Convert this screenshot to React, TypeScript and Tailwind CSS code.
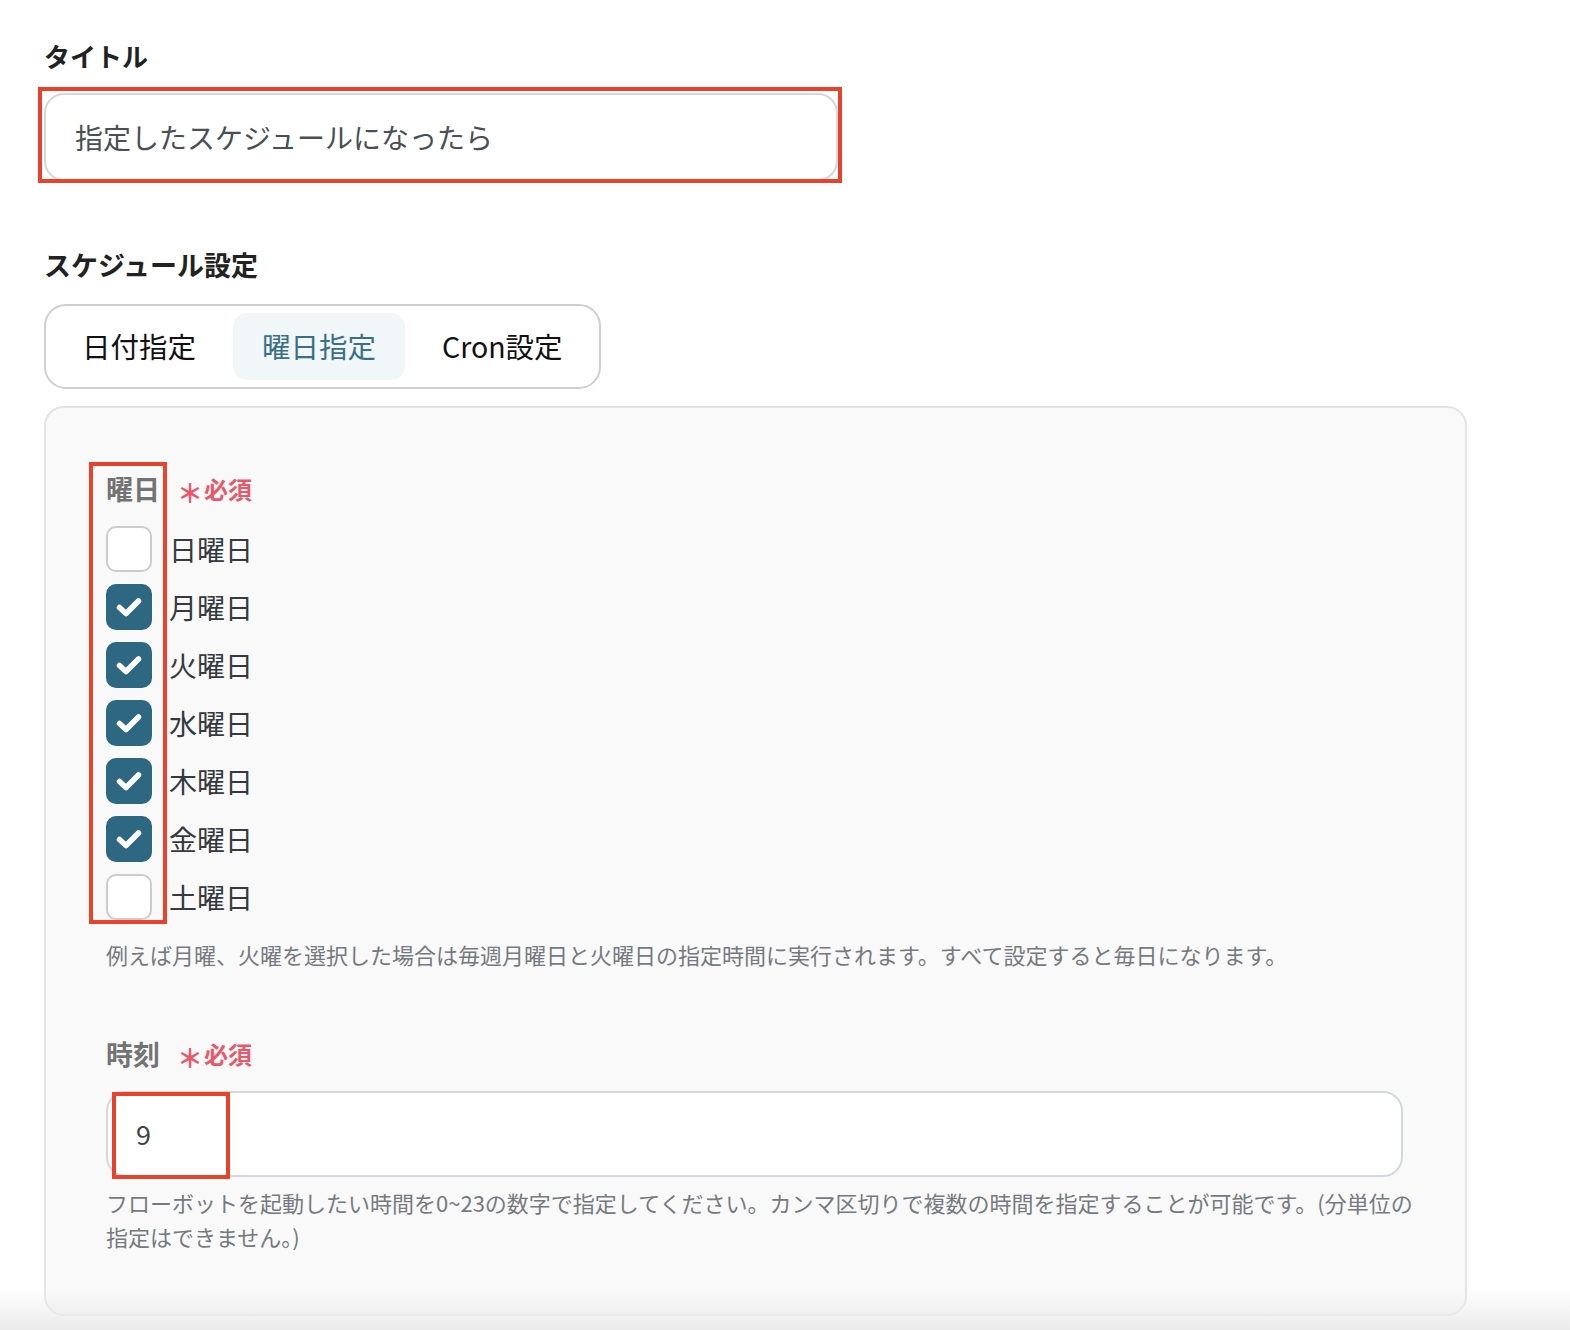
import React from 'react';

const days = [
  { label: '日曜日', checked: false },
  { label: '月曜日', checked: true },
  { label: '火曜日', checked: true },
  { label: '水曜日', checked: true },
  { label: '木曜日', checked: true },
  { label: '金曜日', checked: true },
  { label: '土曜日', checked: false },
];

const Required: React.FC = () => (
  <span className="ml-[17px] flex items-center text-[#e8586a] font-bold">
    <span className="text-[26px] leading-none mt-[6px]">＊</span>
    <span className="text-[24px] leading-none ml-[1px]">必須</span>
  </span>
);

const CheckBox: React.FC<{ checked: boolean }> = ({ checked }) =>
  checked ? (
    <span className="flex items-center justify-center w-[46px] h-[46px] rounded-[10px] bg-[#2e6781]">
      <svg width="30" height="24" viewBox="0 0 30 24" fill="none">
        <path d="M5.5 12.5l6.5 6L24.5 6" stroke="white" strokeWidth="5.5" strokeLinecap="round" strokeLinejoin="round" />
      </svg>
    </span>
  ) : (
    <span className="block w-[46px] h-[46px] rounded-[10px] bg-white border-2 border-[#cccccc]" />
  );

const App: React.FC = () => {
  return (
    <div className="relative min-h-[1330px] overflow-hidden bg-white pl-[44px] pt-[40px] font-['Noto_Sans_CJK_JP',sans-serif] text-[#222]">
      <h2 className="text-[26px] font-bold leading-[32px]">タイトル</h2>
      <div className="relative mt-[21px] w-[794px] h-[88px]">
        <div className="flex items-center h-full rounded-[20px] border-2 border-[#d4d7db] bg-white px-[29px] text-[28px] text-[#4a4f55]">
          指定したスケジュールになったら
        </div>
        <div className="absolute left-[-6px] top-[-6px] w-[804px] h-[96px] border-4 border-[#e8412c]" />
      </div>

      <h2 className="mt-[68px] text-[27px] font-bold leading-[32px]">スケジュール設定</h2>
      <div className="mt-[23px] inline-flex gap-[8px] p-[7px] rounded-[22px] border-2 border-[#cfcfcf]">
        <span className="flex items-center h-[67px] px-[29px] rounded-[14px] text-[28.5px] text-[#111]">日付指定</span>
        <span className="flex items-center h-[67px] px-[29px] rounded-[14px] text-[28.5px] text-[#3a6f88] bg-[#f1f7f8]">曜日指定</span>
        <span className="flex items-center h-[67px] px-[29px] rounded-[14px] text-[28.5px] text-[#111]">Cron設定</span>
      </div>

      <div className="mt-[17px] w-[1423px] h-[910px] rounded-[20px] border-2 border-[#e4e4e4] bg-[#f9f9f9] pl-[60px] pt-[65px]">
        <div className="relative">
          <div className="flex items-center h-[32px]">
            <span className="text-[27px] font-bold text-[#737373]">曜日</span>
            <Required />
          </div>
          <div className="mt-[21px] flex flex-col gap-[12px]">
            {days.map((d) => (
              <div key={d.label} className="flex items-center gap-[17px]">
                <CheckBox checked={d.checked} />
                <span className="text-[28px] text-[#343a40]">{d.label}</span>
              </div>
            ))}
          </div>
          <div className="absolute left-[-17px] top-[-11px] w-[78px] h-[462px] border-4 border-[#e8412c]" />
        </div>
        <p className="mt-[19px] text-[22px] leading-[30px] text-[#757a80]">
          例えば月曜、火曜を選択した場合は毎週月曜日と火曜日の指定時間に実行されます。すべて設定すると毎日になります。
        </p>

        <div className="mt-[69px] flex items-center h-[32px]">
          <span className="text-[27px] font-bold text-[#737373]">時刻</span>
          <Required />
        </div>
        <div className="relative mt-[21px] w-[1297px] h-[86px]">
          <div className="flex items-center h-full rounded-[20px] border-2 border-[#d3d8dd] bg-white pl-[28px] text-[27px] text-[#3f4449]">
            9
          </div>
          <div className="absolute left-[6px] top-[1px] w-[118px] h-[87px] border-4 border-[#e8412c]" />
        </div>
        <p className="mt-[8px] w-[1340px] whitespace-nowrap text-[22px] leading-[34px] text-[#757a80]">
          フローボットを起動したい時間を0~23の数字で指定してください。カンマ区切りで複数の時間を指定することが可能です。(分単位の
          <br />
          指定はできません。)
        </p>
      </div>

      <div className="pointer-events-none absolute bottom-0 left-0 right-0 h-[42px] bg-linear-to-b from-white/0 to-[#ebebeb]" />
    </div>
  );
};

export default App;
